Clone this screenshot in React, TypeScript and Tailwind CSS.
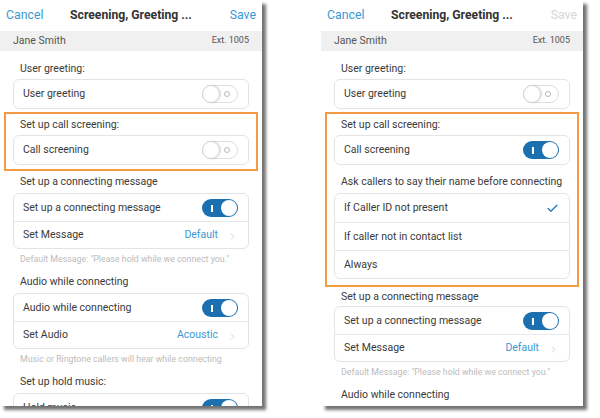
import { Check, ChevronRight } from "lucide-react";

type Row = { label: string; kind: "on" | "off" | "link" | "check" | "none"; value?: string };

function Toggle({ on }: { on: boolean }) {
    if (on) {
        return (
            <div className="relative h-[18px] w-[36px] rounded-full bg-[#1c70b0]">
                <div className="absolute left-[9px] top-[6px] h-[7px] w-[1.5px] bg-white" />
                <div className="absolute right-[1px] top-[1px] h-[16px] w-[16px] rounded-full bg-white" />
            </div>
        );
    }
    return (
        <div className="relative h-[18px] w-[36px] rounded-full border border-[#dedede] bg-white">
            <div className="absolute left-[-1px] top-[-1px] h-[18px] w-[18px] rounded-full border border-[#d4d4d4] bg-white shadow-[1px_0_2px_rgba(0,0,0,0.12)]" />
            <div className="absolute right-[7px] top-[5px] h-[6px] w-[6px] rounded-full border border-[#b8b8b8]" />
        </div>
    );
}

function Card({ rows, rowH = "h-[28px]" }: { rows: Row[]; rowH?: string }) {
    return (
        <div className="rounded-[6px] border border-[#e4e4e4] bg-white">
            {rows.map((r, i) => (
                <div
                    key={r.label}
                    className={`flex ${rowH} items-center justify-between pl-[9px] pr-[10px] ${i > 0 ? "border-t border-[#e8e8e8]" : ""}`}
                >
                    <span className="text-[10.5px] text-[#3a3a3a]">{r.label}</span>
                    {r.kind === "on" && <Toggle on />}
                    {r.kind === "off" && <Toggle on={false} />}
                    {r.kind === "check" && <Check size={13} strokeWidth={2.5} className="text-[#1f7cc2]" />}
                    {r.kind === "link" && (
                        <div className="flex items-center gap-[9px]">
                            <span className="text-[10.5px] text-[#3b97d3]">{r.value}</span>
                            <ChevronRight size={11} strokeWidth={1.5} className="mt-[3px] text-[#c4c4c4]" />
                        </div>
                    )}
                </div>
            ))}
        </div>
    );
}

function Label({ children, h = "h-[22px]" }: { children: string; h?: string }) {
    return <div className={`flex ${h} items-center pl-[7px] text-[10.5px] text-[#3a3a3a]`}>{children}</div>;
}

function Hint({ children }: { children: string }) {
    return <div className="flex h-[22px] items-center pl-[7px] text-[8.8px] text-[#bcbcbc]">{children}</div>;
}

function Phone({ saveEnabled, expanded, className }: { saveEnabled: boolean; expanded: boolean; className?: string }) {
    return (
        <div className={`h-[406px] w-[262px] shrink-0 overflow-hidden bg-white shadow-[4px_4px_3px_rgba(0,0,0,0.55)] ${className ?? ""}`}>
            <div className="grid h-[31px] grid-cols-[1fr_auto_1fr] items-center px-[6px]">
                <span className="text-[12.3px] text-[#3b97d3]">Cancel</span>
                <span className="text-[12.2px] font-bold text-[#333]">Screening, Greeting ...</span>
                <span className={`text-right text-[12.3px] ${saveEnabled ? "text-[#3b97d3]" : "text-[#d6d6d6]"}`}>Save</span>
            </div>
            <div className="flex h-[20px] items-center justify-between bg-[#f0f0f0] pl-[13px] pr-[13px]">
                <span className="text-[10.5px] text-[#555]">Jane Smith</span>
                <span className="text-[9px] text-[#555]">Ext. 1005</span>
            </div>

            <div className="px-[13px]">
                <div className="mt-[8px]">
                    <Label h="h-[20px]">User greeting:</Label>
                </div>
                <Card rows={[{ label: "User greeting", kind: "off" }]} />

                <div className="-mx-[9px] mt-[3px] border-2 border-[#f39a45] px-[7px] pb-[4px]">
                    <Label h="h-[21px]">Set up call screening:</Label>
                    <Card rows={[{ label: "Call screening", kind: expanded ? "on" : "off" }]} />
                    {expanded && (
                        <div className="pb-[2px]">
                            <div className="mt-[6px]">
                                <Label>Ask callers to say their name before connecting</Label>
                            </div>
                            <Card
                                rowH="h-[28px]"
                                rows={[
                                    { label: "If Caller ID not present", kind: "check" },
                                    { label: "If caller not in contact list", kind: "none" },
                                    { label: "Always", kind: "none" },
                                ]}
                            />
                        </div>
                    )}
                </div>

                <Label h={expanded ? "h-[19px]" : "h-[22px]"}>Set up a connecting message</Label>
                <Card
                    rowH="h-[27px]"
                    rows={[
                        { label: "Set up a connecting message", kind: "on" },
                        { label: "Set Message", kind: "link", value: "Default" },
                    ]}
                />
                <Hint>Default Message: "Please hold while we connect you."</Hint>
                <Label>Audio while connecting</Label>
                {!expanded && (
                    <>
                        <Card
                            rowH="h-[27px]"
                            rows={[
                                { label: "Audio while connecting", kind: "on" },
                                { label: "Set Audio", kind: "link", value: "Acoustic" },
                            ]}
                        />
                        <Hint>Music or Ringtone callers will hear while connecting</Hint>
                        <Label>Set up hold music:</Label>
                        <Card rows={[{ label: "Hold music", kind: "on" }]} />
                    </>
                )}
            </div>
        </div>
    );
}

export default function App() {
    return (
        <div className="flex h-[418px] w-[600px] items-start overflow-hidden bg-white font-['Roboto',sans-serif]">
            <Phone saveEnabled expanded={false} />
            <Phone saveEnabled={false} expanded className="ml-[59px]" />
        </div>
    );
}
